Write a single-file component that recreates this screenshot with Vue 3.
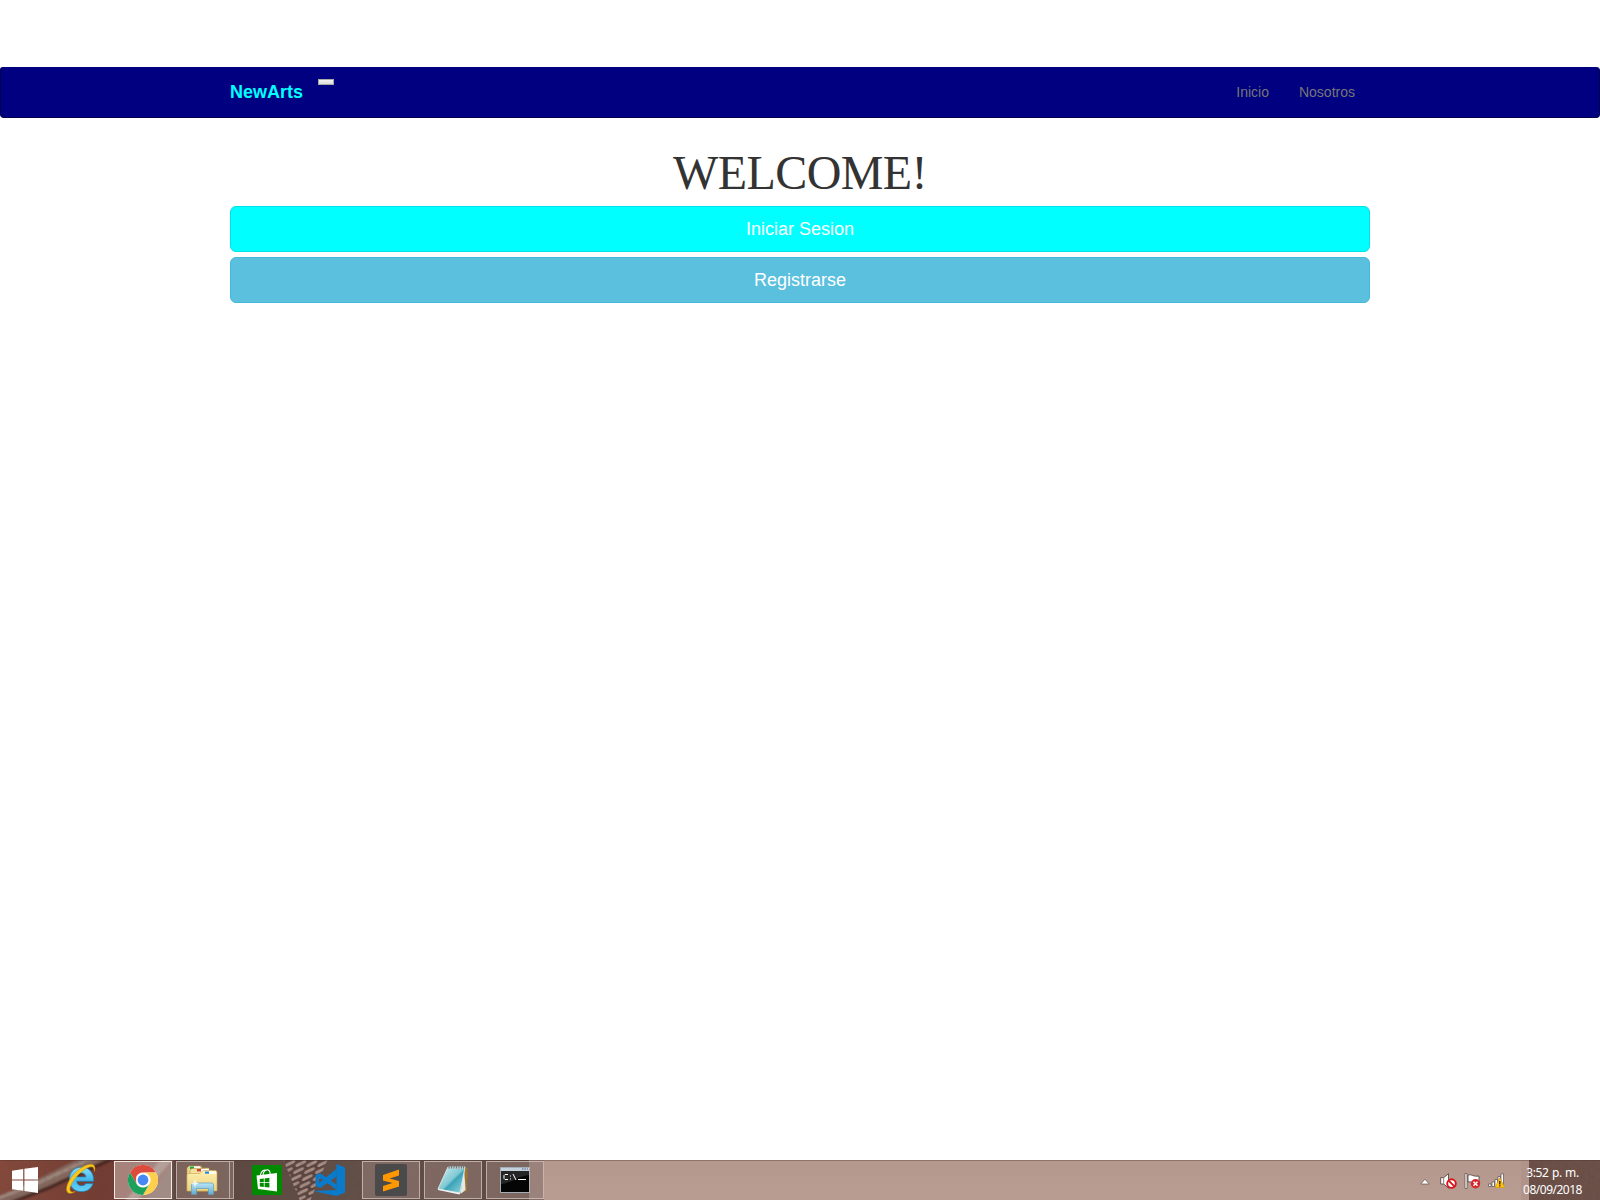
<script setup>
const links = ['Inicio', 'Nosotros']
const actions = [
  { label: 'Iniciar Sesion', kind: 'primary' },
  { label: 'Registrarse', kind: 'info' },
]
</script>

<template>
  <div class="screen">
    <nav class="navbar">
      <div class="container bar">
        <a class="brand">NewArts</a>
        <button class="toggle" aria-label="Menu"></button>
        <ul class="links">
          <li v-for="l in links" :key="l">{{ l }}</li>
        </ul>
      </div>
    </nav>

    <main class="container content">
      <h1>WELCOME!</h1>
      <button v-for="a in actions" :key="a.label" class="btn" :class="a.kind">{{ a.label }}</button>
    </main>

    <footer class="taskbar">
      <svg class="wallpaper" width="1600" height="40" viewBox="0 0 1600 40">
        <defs>
          <linearGradient id="leather" x1="0" x2="1" y1="0" y2="0">
            <stop offset="0" stop-color="#86493c" /><stop offset=".55" stop-color="#733c32" /><stop offset="1" stop-color="#6b4a40" />
          </linearGradient>
          <linearGradient id="cloth" x1="0" x2="1" y1="0" y2="0">
            <stop offset="0" stop-color="#5d463f" /><stop offset=".5" stop-color="#625049" /><stop offset="1" stop-color="#5f4a43" />
          </linearGradient>
          <linearGradient id="haze" x1="0" x2="0" y1="0" y2="1">
            <stop offset="0" stop-color="#b4978d" /><stop offset="1" stop-color="#b99c92" />
          </linearGradient>
          <pattern id="weave" width="11" height="7" patternUnits="userSpaceOnUse" patternTransform="skewX(-18)">
            <rect width="11" height="7" fill="#5b453f" />
            <path d="M2 5.300l6-3.400" stroke="#a88f86" stroke-width="3.400" stroke-linecap="round" />
          </pattern>
          <filter id="soft" x="-10%" y="-20%" width="120%" height="140%"><feGaussianBlur stdDeviation=".9" /></filter>
          <filter id="fine" x="-10%" y="-20%" width="120%" height="140%"><feGaussianBlur stdDeviation=".5" /></filter>
          <filter id="grain" x="0" y="0" width="100%" height="100%">
            <feTurbulence type="fractalNoise" baseFrequency=".25" numOctaves="2" seed="4" />
            <feColorMatrix values="0 0 0 0 .1  0 0 0 0 .06  0 0 0 0 .05  0 0 0 1.2 -.4" />
          </filter>
        </defs>
        <rect width="190" height="40" fill="url(#leather)" />
        <g filter="url(#soft)">
          <path d="M-4 37L28 24 80 -2h28L46 27 14 42H-4z" fill="#85695f" />
          <path d="M-4 39L40 22 92 -2" fill="none" stroke="#a68f85" stroke-width="2.500" />
          <path d="M10 43L48 28 114 -2" fill="none" stroke="#40241f" stroke-width="3" />
          <path d="M124 42L162 -2h12L136 42z" fill="#927b72" />
          <path d="M145 42L176 -2h14v44z" fill="#695149" />
        </g>
        <rect x="174" width="370" height="40" fill="url(#cloth)" />
        <path d="M283 -1h45l-18 42h-10z" fill="url(#weave)" filter="url(#fine)" />
        <rect x="0" width="544" height="40" filter="url(#grain)" opacity=".3" />
        <rect x="544" width="985" height="40" fill="url(#haze)" />
        <rect x="1521" width="8" height="40" fill="#b09389" />
        <rect x="1529" width="71" height="40" fill="#6d5149" />
        <rect x="1529" width="71" height="40" filter="url(#grain)" opacity=".5" />
        <rect width="1600" height="1" fill="#4b302a" opacity=".35" />
      </svg>

      <div class="tasks">
        <div class="task start">
          <svg width="26" height="26" viewBox="0 0 26 26" fill="#fff"><path d="M0 3.800L11.200 2v10.400H0zM12.400 1.800L26 0v12.400H12.400zM0 13.600h11.200v10.200L0 22.200zM12.400 13.600H26V26l-13.600-2z" /></svg>
        </div>
        <div class="task ie">
          <svg width="32" height="32" viewBox="0 0 32 32">
            <defs><linearGradient id="ieBlue" x1="0" y1="0" x2="0" y2="1"><stop offset="0" stop-color="#8ce0fb" /><stop offset=".5" stop-color="#43b9ec" /><stop offset="1" stop-color="#67cff5" /></linearGradient></defs>
            <path d="M16.300 4.200c-7.200 0-12 5.300-12 12.200 0 7 4.800 12.200 12.200 12.200 5.700 0 10-3 11.500-8.100h-7.200c-.8 1.500-2.200 2.200-4.200 2.200-2.900 0-4.700-1.700-4.900-4.500h17C29 9.800 24.400 4.200 16.300 4.200zm-4.500 9.700c.4-2.500 2-4 4.600-4s4.200 1.500 4.500 4z" fill="url(#ieBlue)" stroke="#1583bd" stroke-width=".7" />
            <path d="M29.300 8.500C31 4.300 29.500.9 25.500 1.200 18.500 1.500 8.800 9.500 4.300 17.500 1.200 23 .5 28.200 3.300 29.900c1.800 1 4.300.3 7-1.300-2.400.7-4.200.5-4.900-.6-1.400-2.100.4-6.800 4-11.600C14.200 10 21.400 4.400 25.600 3.800c2.600-.4 3.600 1.400 3.700 4.700z" fill="#fcc719" stroke="#c18b12" stroke-width=".5" />
          </svg>
        </div>
        <div class="task open active">
          <svg width="30" height="30" viewBox="0 0 30 30">
            <circle cx="15" cy="15" r="15" fill="#fff" />
            <path d="M2 7.500A15 15 0 0 1 28 7.500H15a7.500 7.500 0 0 0-6.800 4.600L8.500 18.800z" fill="#dd4b3e" />
            <path d="M28 7.500A15 15 0 0 1 15 30l6.500-11.200A7.500 7.500 0 0 0 15 7.500z" fill="#fdcf4c" />
            <path d="M2 7.500A15 15 0 0 0 15 30l6.500-11.200a7.500 7.500 0 0 1-13 0z" fill="#1ca15d" />
            <circle cx="15" cy="15" r="6.800" fill="#fff" /><circle cx="15" cy="15" r="5.400" fill="#4688f4" />
          </svg>
        </div>
        <div class="task open stacked">
          <svg width="34" height="32" viewBox="0 0 34 32">
            <defs><linearGradient id="folder" x1="0" y1="0" x2="0" y2="1"><stop offset="0" stop-color="#fff0ae" /><stop offset="1" stop-color="#ecd27f" /></linearGradient>
            <linearGradient id="stand" x1="0" y1="0" x2="0" y2="1"><stop offset="0" stop-color="#b9e5f5" /><stop offset="1" stop-color="#63aad0" /></linearGradient></defs>
            <path d="M2 27V4l2-2h12l1 2h7v23z" fill="#eed78a" stroke="#b5944a" stroke-width=".6" />
            <rect x="5" y="2.500" width="10" height="2.500" fill="#fff" /><rect x="5" y="2.500" width="4" height="2.500" fill="#18a83c" />
            <path d="M5 27V6l2-1.500h13l2 2h6V27z" fill="#f6e19b" stroke="#b5944a" stroke-width=".6" />
            <rect x="12" y="5" width="12" height="2.500" fill="#fff" /><rect x="12" y="5" width="4" height="2.500" fill="#d64225" />
            <path d="M2 27V11l1-1.500h12l3-3h13l1 1.500v19z" fill="url(#folder)" stroke="#c4a557" stroke-width=".6" />
            <rect x="20" y="7.500" width="11" height="2.200" fill="#fff" /><rect x="20" y="7.500" width="4" height="2.200" fill="#2687d4" />
            <path d="M6.500 30.500V21q0-2 2-2h18q2 0 2 2v9.500h-5v-6h-12v6z" fill="url(#stand)" stroke="#5d9fc1" stroke-width=".7" />
            <path d="M10 14l.8 4 3.200 1.500-3.200 1L10 24l-.8-3.500L6 19.500 9.200 18z" fill="#fff" opacity=".8" />
          </svg>
        </div>
        <div class="task store">
          <svg width="30" height="30" viewBox="0 0 30 30">
            <rect width="30" height="30" fill="#008a00" />
            <path d="M8.500 10C9 6 12 4 14.500 5.500M11 10c0-4 3.500-6.500 6-4.500 1 .8 1.300 2 1 3.500" fill="none" stroke="#fff" stroke-width="1.100" />
            <path d="M4.500 10.500L25 8v18.500L6 24z" fill="#fff" />
            <path d="M7.800 14l4-.5v3.800h-4zM12.600 13.400l4.800-.6v4.500h-4.800zM7.800 18.100h4v3.800l-4-.5zM12.600 18.100h4.800v4.500l-4.800-.6z" fill="#008a00" />
          </svg>
        </div>
        <div class="task code">
          <svg width="32" height="32" viewBox="0 0 32 32" fill="#0a7acb">
            <path d="M23.500 0L32 3.500v25L23.500 32 0 27l23.500-1z" />
            <path d="M23.500 5v7.500L7 24l-4.500-2.300V11.300L7 9l16.500 11.500V26L17 21 6 13.500v6z" />
            <path d="M23.500 5v7.500L7 24l-2-4z" />
          </svg>
        </div>
        <div class="task open">
          <svg width="32" height="32" viewBox="0 0 32 32">
            <rect width="32" height="32" rx="2" fill="#4a4a4a" />
            <path d="M8 11l16-5.500v6L14.500 14.500 24 17v5.500L8 27.500v-5.600l9.500-3L8 16.500z" fill="#ff9800" />
          </svg>
        </div>
        <div class="task open">
          <svg width="32" height="32" viewBox="0 0 32 32">
            <defs><linearGradient id="note" x1="0" y1="0" x2="1" y2="1"><stop offset="0" stop-color="#d5f0f2" /><stop offset=".5" stop-color="#7fc8d3" /><stop offset=".56" stop-color="#3ba3b7" /><stop offset="1" stop-color="#9ddbe1" /></linearGradient></defs>
            <path d="M27 4l4 0-1 23-7 2z" fill="#9c7434" />
            <path d="M27 3L28.500 26l-5 4z" fill="#e4e9e8" />
            <path d="M11 3h17l-5 26L1 25z" fill="url(#note)" stroke="#dcecef" stroke-width=".9" />
            <path d="M1 25l22 4-.5 1.500L1 26z" fill="#f4f7f7" />
            <path d="M11 3h17l-.5 2H10.500z" fill="#b9cccf" /><path d="M12 1.500v3m2.500-3v3m2.500-3v3m2.500-3v3m2.500-3v3m2.500-3v3m2-3v3" stroke="#6d7879" />
          </svg>
        </div>
        <div class="task open veiled">
          <svg width="30" height="26" viewBox="0 0 30 26">
            <rect x=".5" y=".5" width="29" height="25" fill="#050505" stroke="#a3adb5" />
            <path d="M1 1h28v3H1z" fill="#c4d0dc" /><path d="M22 2h1.500m1 0H26m1 0h1" stroke="#4d6587" />
            <path d="M1 13V4h28v4C18 9 12 16 1 17z" fill="#333" opacity=".7" />
            <path d="M8 7.500H5L4 8.500v3l1 1h3M10.500 8.500v1m0 2v1M13 7l3 6M18 12.500h8" fill="none" stroke="#fff" stroke-width="1" />
          </svg>
        </div>
      </div>

      <div class="tray">
        <svg class="chev" width="10" height="7" viewBox="0 0 10 7"><path d="M.8 6L5 1.200 9.200 6z" fill="#fff" stroke="#66534f" stroke-width=".7" /></svg>
        <svg width="17" height="16" viewBox="0 0 17 16">
          <path d="M.7 4.700h3L8.500.7v14.500L3.700 11h-3z" fill="#fff" stroke="#594a47" stroke-width=".9" /><path d="M3.700 5v6" stroke="#8d7c78" />
          <circle cx="11.500" cy="10.600" r="4.300" fill="#fff" stroke="#d9151c" stroke-width="1.900" /><path d="M8.700 7.700l5.700 5.700" stroke="#d9151c" stroke-width="1.900" />
        </svg>
        <svg width="17" height="16" viewBox="0 0 17 16">
          <path d="M1 .5h2v15H1z" fill="#fff" stroke="#594a47" stroke-width=".7" /><path d="M4 2c4-1 5 2 11 1v7c-5 1-7-2-11-1z" fill="#fff" stroke="#594a47" stroke-width=".9" />
          <circle cx="11.500" cy="10.800" r="4.700" fill="#d9252a" /><path d="M9.500 8.800l4 4m0-4l-4 4" stroke="#fff" stroke-width="1.500" />
        </svg>
        <svg width="17" height="16" viewBox="0 0 17 16">
          <g fill="#fff" stroke="#594a47" stroke-width=".7"><path d="M.5 11h2.500v2.500H.5zM4 9h2.500v4.500H4zM7 6.500h2.500v7H7zM10 3.500h2.500v10H10zM13 .8h2.500v12.700H13z" /></g>
          <path d="M11.800 4.800l5 9.700h-10z" fill="#ffc20e" stroke="#d5980a" stroke-width=".6" /><path d="M11.800 8v3.500m0 .8v1.200" stroke="#33261c" stroke-width="1.400" />
        </svg>
      </div>
      <div class="clock"><span class="time">3:52 p. m.</span><span>08/09/2018</span></div>
    </footer>
  </div>
</template>

<style>
body { margin: 0; background: #fff; }
</style>

<style scoped>
.screen {
  box-sizing: border-box;
  height: 1200px;
  padding-top: 67px;
  display: flex;
  flex-direction: column;
  background: #fff;
  overflow: hidden;
  font-family: "Liberation Sans", Arial, sans-serif;
}
.container { width: 1140px; margin: 0 auto; }
.navbar {
  box-sizing: border-box;
  height: 51px;
  background: #000080;
  border: 1px solid #00004d;
  border-top: 0;
  border-radius: 3px 4px 4px 4px;
}
.bar { display: flex; align-items: flex-start; height: 50px; }
.brand { color: #00ffff; font-size: 18px; font-weight: 700; line-height: 20px; padding-top: 15px; width: 88px; }
.toggle {
  box-sizing: border-box;
  width: 16px;
  height: 6px;
  margin: 12px 0 0;
  padding: 0;
  border: 1px solid #a8a8a5;
  background: linear-gradient(#f2f2f2, #dddddd);
}
.links { list-style: none; display: flex; margin: 0 0 0 auto; padding: 0; }
.links li { padding: 15px; color: #777; font-size: 14px; line-height: 20px; }
.content { flex: 1; display: flex; flex-direction: column; }
h1 {
  margin: 28px 0 7px;
  height: 53px;
  text-align: center;
  color: #333;
  font: 400 48px/53px "Liberation Serif", "Times New Roman", serif;
  letter-spacing: -.6px;
}
.btn {
  box-sizing: border-box;
  height: 46px;
  margin-bottom: 5px;
  padding: 0;
  border: 1px solid;
  border-radius: 6px;
  color: #fff;
  font: 18px/24px "Liberation Sans", Arial, sans-serif;
}
.primary { background: #00ffff; border-color: #00e0e6; }
.info { background: #5bc0de; border-color: #46b8da; }

.taskbar { position: relative; height: 40px; display: flex; align-items: stretch; }
.wallpaper { position: absolute; inset: 0; }
.tasks, .tray, .clock { position: relative; display: flex; }
.tasks { align-items: center; }
.task { box-sizing: border-box; height: 38px; display: flex; align-items: center; justify-content: center; }
.task svg { flex: none; }
.start { width: 50px; padding-bottom: 1px; }
.ie { width: 62px; padding-bottom: 2px; }
.open {
  width: 58px;
  margin-right: 4px;
  border: 1px solid rgba(235, 220, 215, .6);
  background: rgba(205, 175, 170, .28);
}
.ie + .open { margin-left: 2px; }
.active { border-color: #f0e8e4; background: rgba(225, 205, 200, .48); }
.stacked { width: 54px; margin-right: 0; position: relative; padding-right: 2px; }
.stacked::after {
  content: "";
  position: absolute;
  left: 53px;
  top: -1px;
  width: 3px;
  height: 36px;
  border: 1px solid rgba(235, 220, 215, .55);
  border-left: 0;
  background: rgba(205, 175, 170, .28);
}
.veiled { position: relative; padding-right: 1px; }
.veiled::after {
  content: "";
  position: absolute;
  right: -1px;
  top: -2px;
  width: 15px;
  height: 40px;
  background: rgba(225, 195, 185, .3);
}
.store { width: 30px; margin-left: 22px; }
.code { width: 32px; margin: 0 17px 0 31px; }
.tray { margin-left: auto; align-items: center; gap: 7px; padding-top: 2px; }
.chev { margin-right: 3px; }
.clock {
  width: 95px;
  flex-direction: column;
  align-items: center;
  padding: 4px 0 0;
  box-sizing: border-box;
  color: #fff;
  font: 12px/17px "Noto Sans", sans-serif;
  white-space: nowrap;
}
.clock span { letter-spacing: -.5px; }
.clock .time { letter-spacing: -.35px; word-spacing: .5px; }
</style>
